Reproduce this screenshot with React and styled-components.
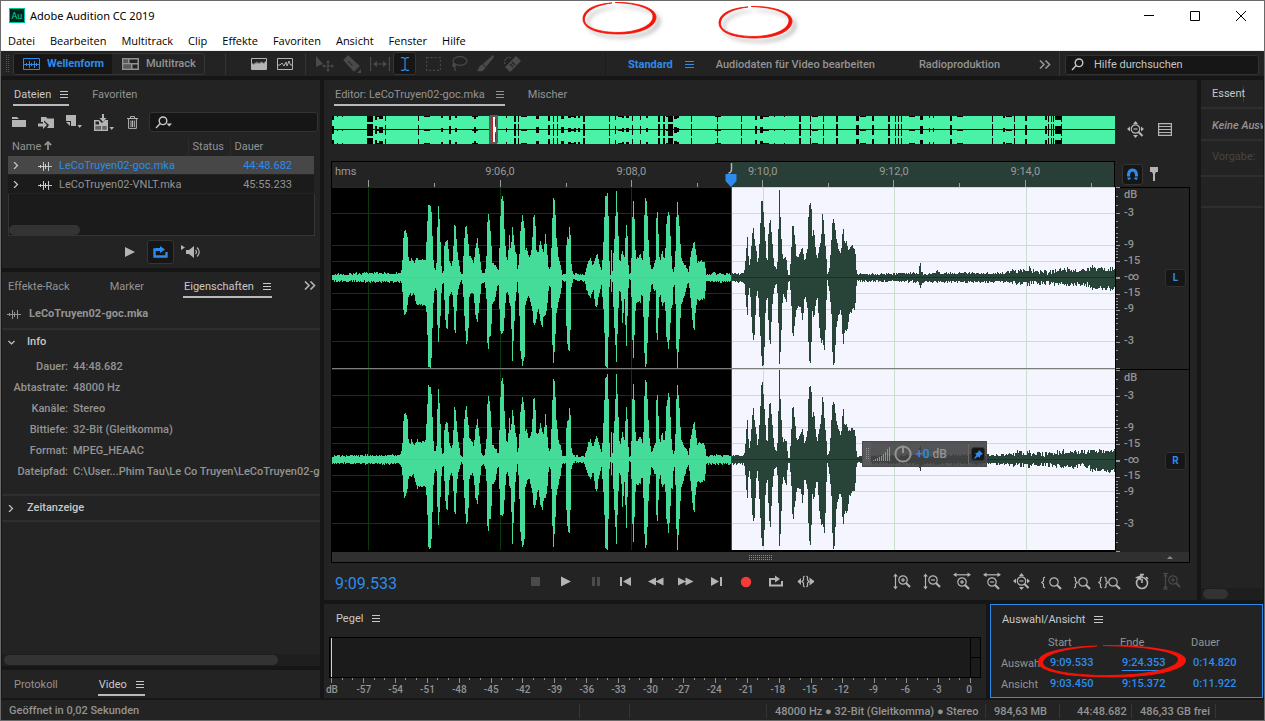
import React from "react";
import styled, { createGlobalStyle, css } from "styled-components";

const c = {
  gap: "#161616",
  panel: "#232323",
  well: "#1b1b1b",
  line: "#353535",
  dim: "#939393",
  text: "#c8c8c8",
  icon: "#b4b4b4",
  off: "#4a4a4a",
  blue: "#2d8ceb",
  green: "#44dc98",
  dark: "#284337",
};

const Global = createGlobalStyle`
  * { box-sizing: border-box; }
  body { margin: 0; background: ${c.gap}; }
  button, input { font: inherit; color: inherit; margin: 0; padding: 0; border: 0; background: none; }
  button { cursor: default; }
`;

/* ---------- shell ---------- */
const Shell = styled.div`
  position: relative;
  display: flex;
  flex-direction: column;
  min-height: 100vh;
  border: 1px solid #6a6a6a;
  background: ${c.gap};
  color: ${c.dim};
  font: 500 11px/16px Roboto, "Liberation Sans", sans-serif;
  overflow: hidden;
  white-space: nowrap;
`;
const Chrome = styled.header`
  background: #fff;
  color: #000;
  font: 400 11px/16px "Open Sans", "Noto Sans", sans-serif;
  box-shadow: inset 0 -1px #eee;
`;
const TitleBar = styled.div`
  display: flex;
  align-items: center;
  height: 29px;
  padding-left: 8px;
`;
const AppName = styled.h1`
  flex: 1;
  margin: 0 0 0 5px;
  font: 400 11px/16px "Noto Sans", sans-serif;
`;
const WinButton = styled.button`
  display: grid;
  place-items: center;
  width: 46px;
  height: 28px;
`;
const MenuBar = styled.nav`
  display: flex;
  gap: 15px;
  height: 21px;
  padding-left: 7px;
  align-items: center;
`;
const MenuItem = styled.button`
  line-height: 18px;
`;

/* ---------- toolbar ---------- */
const ToolBar = styled.div`
  display: flex;
  align-items: center;
  height: 25px;
  margin-bottom: 4px;
  background: ${c.panel};
`;
const Modes = styled.div`
  display: flex;
  height: 22px;
  margin-left: 3px;
  border: 1px solid ${c.line};
  border-radius: 3px;
  overflow: hidden;
`;
const Mode = styled.button`
  display: flex;
  align-items: center;
  gap: 7px;
  width: ${(p) => (p.$on ? 98 : 92)}px;
  padding-left: ${(p) => (p.$on ? 9 : 10)}px;
  background: ${(p) => (p.$on ? c.gap : "none")};
  color: ${(p) => (p.$on ? c.blue : c.dim)};
  font-weight: ${(p) => (p.$on ? 700 : 500)};
`;
const Rule = styled.span`
  width: 1px;
  height: ${(p) => p.$h || 22}px;
  background: ${(p) => p.$c || c.line};
  flex: none;
`;
const ToolGroup = styled.div`
  display: flex;
  align-items: center;
  justify-content: center;
  padding: ${(p) => p.$pad || "0"};
  gap: ${(p) => p.$gap || 0}px;
`;
const IconButton = styled.button`
  display: grid;
  place-items: center;
  flex: none;
  width: ${(p) => p.$w || 24}px;
  height: ${(p) => p.$h || 24}px;
  color: ${(p) => (p.$off ? c.off : p.$blue ? c.blue : p.$red ? "#f73b3b" : c.icon)};
  ${(p) =>
    p.$boxed &&
    css`
      background: ${c.gap};
      border: 1px solid ${c.line};
      border-radius: 3px;
    `}
`;
const Spaces = styled.div`
  display: flex;
  flex: 1;
  align-items: center;
  padding: 2px 0 0 22px;
`;
const Space = styled.button`
  display: flex;
  align-items: center;
  gap: 12px;
  margin-right: ${(p) => p.$mr || 0}px;
  color: ${(p) => (p.$on ? c.blue : c.dim)};
  font-weight: ${(p) => (p.$on ? 700 : 500)};
`;
const SearchBox = styled.label`
  display: flex;
  align-items: center;
  gap: ${(p) => p.$gap || 4}px;
  height: 20px;
  width: ${(p) => (p.$w ? p.$w + "px" : "auto")};
  flex: ${(p) => (p.$w ? "none" : 1)};
  padding-left: 5px;
  background: ${c.gap};
  border: 1px solid #333;
  border-radius: 3px;
  color: ${c.text};
  input {
    flex: 1;
    min-width: 0;
    outline: none;
    font-weight: 400;
  }
  input::placeholder { color: #c4c4c4; opacity: 1; }
`;

/* ---------- workspace ---------- */
const Workspace = styled.main`
  display: flex;
  flex: 1;
  gap: 4px;
  padding: 0 1px;
`;
const Column = styled.div`
  display: flex;
  flex-direction: column;
  gap: 4px;
  min-width: 0;
  flex: ${(p) => (p.$w ? "none" : 1)};
  width: ${(p) => (p.$w ? p.$w + "px" : "auto")};
`;
const Row = styled.div`
  display: flex;
  gap: 4px;
  flex: ${(p) => (p.$grow ? 1 : "none")};
`;
const Panel = styled.section`
  display: flex;
  flex-direction: column;
  min-width: 0;
  flex: ${(p) => (p.$grow ? 1 : "none")};
  width: ${(p) => (p.$w ? p.$w + "px" : "auto")};
  background: ${c.panel};
  border: ${(p) => (p.$active ? `1px solid ${c.blue}` : "0")};
  overflow: hidden;
`;
const Tabs = styled.div`
  display: flex;
  align-items: flex-start;
  gap: ${(p) => p.$gap || 22}px;
  height: ${(p) => p.$h || 28}px;
  padding: 6px 4px 0 ${(p) => (p.$pl === undefined ? 11 : p.$pl)}px;
`;
const TabSet = styled.div`
  display: flex;
  gap: 38px;
`;
const Tab = styled.button`
  display: flex;
  align-items: center;
  gap: ${(p) => p.$gap || 9}px;
  height: 20px;
  padding: 0 1px 1px;
  border-bottom: 2px solid ${(p) => (p.$on ? "#b9b9b9" : "transparent")};
  color: ${(p) => (p.$bright ? c.text : c.dim)};
  font-weight: 400;
`;
const PushRight = styled.span`
  margin-left: auto;
  display: flex;
`;

/* files panel */
const FileTools = styled.div`
  display: flex;
  align-items: center;
  padding: 2px 5px 0 4px;
`;
const FileTable = styled.table`
  width: 306px;
  margin: 4px 6px 0;
  border-collapse: collapse;
  table-layout: fixed;
  th, td { padding: 0; font-weight: 400; text-align: left; }
  th { height: 18px; padding-left: 4px; }
  th + th { border-left: 1px solid #2c2c2c; }
`;
const FileRow = styled.tr`
  height: 19px;
  background: ${(p) => (p.$on ? "#474747" : c.well)};
  color: ${(p) => (p.$on ? c.blue : c.dim)};
  box-shadow: inset 0 -1px ${c.panel};
  td:last-child { text-align: right; padding-right: 22px; }
`;
const FileName = styled.span`
  display: flex;
  align-items: center;
  padding-left: 5px;
  svg { color: ${c.text}; }
  svg + svg { margin: 0 7px 0 18px; }
`;
const ListRest = styled.div`
  display: flex;
  align-items: flex-end;
  height: 42px;
  margin: 0 5px 0 6px;
  background: ${c.well};
  border: solid ${c.line};
  border-width: 0 1px 1px;
`;
const Thumb = styled.div`
  width: ${(p) => p.$w};
  height: 10px;
  border-radius: 5px;
  background: #333;
`;
const Preview = styled.div`
  display: flex;
  align-items: center;
  justify-content: center;
  gap: 4px;
  height: 32px;
`;

/* properties panel */
const Subject = styled.div`
  display: flex;
  align-items: center;
  gap: 8px;
  height: 30px;
  padding-left: 5px;
  border-bottom: 2px solid #2e2e2e;
  font-weight: 700;
`;
const Fold = styled.button`
  display: flex;
  align-items: center;
  gap: ${(p) => p.$gap || 12}px;
  height: 24px;
  padding-left: 6px;
  color: ${c.text};
`;
const Facts = styled.dl`
  display: grid;
  grid-template-columns: 66px 1fr;
  column-gap: 5px;
  grid-auto-rows: 21px;
  align-items: center;
  margin: 2px 0 12px;
  dt { text-align: right; }
  dd { margin: 0; overflow: hidden; }
`;
const FoldRow = styled.div`
  border: solid #2e2e2e;
  border-width: 2px 0;
`;
const ScrollTrack = styled.div`
  margin-top: auto;
  padding: 1px 2px;
  background: #1e1e1e;
`;

/* editor */
const EditorBody = styled.div`
  display: flex;
  flex: 1;
  flex-direction: column;
  padding: 0 7px;
`;
const Split = styled.div`
  display: flex;
  padding-top: ${(p) => p.$pt || 0}px;
  flex: ${(p) => (p.$grow ? 1 : "none")};
`;
const Side = styled.div`
  display: flex;
  align-items: center;
  flex: none;
  width: 75px;
  gap: ${(p) => p.$gap || 0}px;
  padding-left: ${(p) => p.$pl || 7}px;
`;
const Strip = styled.svg`
  display: block;
  flex: 1;
  min-width: 0;
  height: 29px;
  margin-left: 1px;
`;
const Ruler = styled.div`
  display: grid;
  grid-template-columns: 205fr repeat(5, 263fr) 46fr;
  flex: 1;
  height: 26px;
  border: solid #000;
  border-width: 1px 1px 0;
  font-weight: 400;
  text-align: center;
  color: #9a9a9a;
  svg { grid-area: 1 / 1 / 2 / -1; width: 100%; height: 25px; display: block; }
`;
const Mark = styled.span`
  grid-row: 1;
  grid-column: ${(p) => p.$col};
  padding-top: 2px;
`;
const Unit = styled(Mark)`
  text-align: left;
  padding-left: 3px;
`;
const Waves = styled.div`
  position: relative;
  display: flex;
  flex: 1;
  flex-direction: column;
  border: solid #000;
  border-width: 0 1px 2px;
  background: #000;
`;
const Channel = styled.svg`
  display: block;
  flex: 1;
  width: 100%;
  height: 0;
  min-height: 60px;
  border-bottom: ${(p) => (p.$line ? "1px solid #7d7d7d" : 0)};
`;
const Scales = styled.div`
  display: flex;
  flex-direction: column;
  width: 74px;
  border: solid #000;
  border-width: 0 1px 0 0;
  box-shadow: inset 0 1px #000;
`;
const Scale = styled.div`
  display: flex;
  align-items: center;
  flex: 1;
  border-bottom: ${(p) => (p.$line ? "1px solid #000" : 0)};
  svg { align-self: stretch; width: 6px; height: auto; }
`;
const ScaleNumbers = styled.div`
  display: grid;
  align-self: stretch;
  flex: 1;
  grid-template-rows: 16fr 20fr 14fr 16fr 16fr 16fr 16fr 16fr 14fr 20fr 18fr;
  align-items: center;
  padding-left: 2px;
  line-height: 14px;
`;
const ChannelButton = styled.button`
  width: 21px;
  height: 18px;
  margin-right: 3px;
  border: 1px solid #303030;
  border-radius: 3px;
  background: ${c.gap};
  color: ${c.blue};
  font-size: 10px;
  font-weight: 700;
`;
const WaveScroll = styled.div`
  display: flex;
  align-items: center;
  justify-content: space-between;
  height: 11px;
  padding: 0 16px 0 417px;
  border: 1px solid #000;
  border-top: 0;
  background: #303030;
  color: #8a8a8a;
`;
const Hud = styled.div`
  position: absolute;
  left: 530px;
  top: 254px;
  display: flex;
  align-items: center;
  width: 125px;
  height: 26px;
  border: 1px solid #4a4a4c;
  background: rgba(66, 66, 68, 0.9);
  font-size: 12px;
  b { color: ${c.blue}; font-weight: 500; }
`;
const HudGrip = styled.span`
  display: grid;
  place-items: center;
  width: 8px;
  height: 100%;
  margin-right: 2px;
  background: #5a5a5c;
`;
const HudValue = styled.span`
  flex: 1;
  margin-left: 4px;
`;
const Transport = styled.div`
  display: flex;
  align-items: center;
  justify-content: space-between;
  height: 37px;
  padding: 0 10px 0 11px;
`;
const Time = styled.output`
  width: 185px;
  color: ${c.blue};
  font: 400 16px/20px Roboto, sans-serif;
  padding-top: 4px;
`;
const Spacer = styled.span`
  flex: 1;
`;

/* right hand panel */
const SideRow = styled.div`
  height: ${(p) => p.$h}px;
  padding: ${(p) => p.$pt || 0}px 0 0 11px;
  border-bottom: 2px solid #2e2e2e;
  color: ${(p) => p.$c || c.dim};
  font-style: ${(p) => (p.$it ? "italic" : "normal")};
  font-weight: ${(p) => (p.$it ? 500 : 400)};
  overflow: hidden;
`;
const Cut = styled.button`
  width: 32px;
  text-align: left;
  border-right: 1px solid #3a3a3a;
  color: ${c.text};
`;

/* level meter */
const Meter = styled.div`
  display: flex;
  height: 41px;
  margin: 5px 5px 0;
  border: 1px solid #000;
  background: ${c.well};
`;
const MeterBars = styled.div`
  flex: 1;
  margin-left: 1px;
  border-left: 1px solid #e8e42c;
`;
const MeterClip = styled.div`
  width: 10px;
  border-left: 1px solid #000;
  background: linear-gradient(#000, #000) 0 19px / 100% 1px no-repeat;
`;
const MeterScale = styled.svg`
  display: block;
  width: calc(100% - 22px);
  height: 5px;
  margin-left: 7px;
`;
const MeterNumbers = styled.div`
  display: grid;
  grid-template-columns: repeat(21, minmax(0, 1fr));
  margin: 0 1px 0 -8px;
  font-size: 10px;
  line-height: 14px;
  text-align: center;
`;

/* selection panel */
const SelTable = styled.table`
  border-collapse: collapse;
  margin: 0 0 2px 10px;
  width: 244px;
  table-layout: fixed;
  th, td { padding: 0; height: 21px; text-align: left; font-weight: 400; }
  thead th { height: 20px; }
  td { color: ${c.blue}; padding-left: 2px; font-weight: 500; }
`;
const Value = styled.button`
  display: block;
  line-height: 14px;
  border-bottom: 1px solid ${(p) => (p.$edit ? c.blue : "transparent")};
`;

const Ring = styled.svg`
  position: absolute;
  pointer-events: none;
  overflow: visible;
  ${(p) => p.$at}
`;

const StatusBar = styled.footer`
  display: flex;
  align-items: center;
  height: 20px;
  margin-top: 2px;
  padding: 1px 0 0 8px;
  background: ${c.panel};
`;
const Cell = styled.span`
  width: ${(p) => p.$w}px;
  height: 14px;
  line-height: 16px;
  border-left: 1px solid ${c.line};
  padding-left: ${(p) => p.$pl || 8}px;
`;

/* ---------- icons ---------- */
const Icon = ({ w = 16, h = 16, children, ...r }) => (
  <svg width={w} height={h} viewBox={`0 0 ${w} ${h}`} fill="none" stroke="currentColor" strokeWidth="1.2" aria-hidden="true" {...r}>
    {children}
  </svg>
);
const F = { fill: "currentColor", stroke: "none" };
const Burger = ({ w = 8 }) => (
  <Icon w={w} h={9} strokeWidth="1">
    <path d={`M0 1.500H${w}M0 4.500H${w}M0 7.500H${w}`} />
  </Icon>
);
const WaveGlyph = () => (
  <Icon w={14} h={10} strokeWidth="1">
    <path d="M0 5.500H14M2.500 4V7M5.500 1V10M7.500 3V8M10.500 1V10M12.500 5V6" />
  </Icon>
);
const More = () => (
  <Icon w={12} h={9} strokeWidth="1.600">
    <path d="M1 .500L5 4.500L1 8.500M6.500 .500L10.500 4.500L6.500 8.500" />
  </Icon>
);
const Chev = ({ down }) => (
  <Icon w={7} h={7} strokeWidth="1.200">
    <path d={down ? "M.500 2L3.500 5L6.500 2" : "M1 0L4.500 3.500L1 7"} />
  </Icon>
);
const SearchGlyph = ({ w = 13, drop }) => (
  <Icon w={drop ? 18 : w} h={13} strokeWidth="1.400">
    <circle cx="8" cy="4.800" r="3.800" />
    <path d="M5.200 7.600L1 12" />
    {drop && <path d="M11.500 7.500H17L14.200 10.500Z" {...F} />}
  </Icon>
);
const Lens = ({ x = 9, y = 7, sign }) => (
  <>
    <circle cx={x} cy={y} r="4.200" strokeWidth="1.200" />
    <path d={`M${x + 3} ${y + 3}L${x + 7} ${y + 7}`} strokeWidth="2.200" />
    {sign && <path d={`M${x - 2} ${y}H${x + 2}`} />}
    {sign === "+" && <path d={`M${x} ${y - 2}V${y + 2}`} />}
  </>
);
const VArrow = () => (
  <>
    <path d="M2.500 2V15" />
    <path d="M.200 3.600L2.500 .500L4.800 3.600ZM.200 13.400L2.500 16.500L4.800 13.400Z" {...F} />
  </>
);
const HArrow = () => (
  <>
    <path d="M2 1.800H16" />
    <path d="M3.500 -.400L0 1.800L3.500 4ZM14.500 -.400L18 1.800L14.500 4Z" {...F} />
  </>
);
const FourWay = () => <path d="M8.500 0L11 3H6ZM8.500 17L11 14H6ZM0 8L3 5.500V10.500ZM17 8L14 5.500V10.500Z" {...F} />;

const zoomIcons = [
  ["Amplitude vergrößern", <><VArrow /><Lens x={10} sign="+" /></>],
  ["Amplitude verkleinern", <><VArrow /><Lens x={10} sign="-" /></>],
  ["Zeit vergrößern", <><HArrow /><Lens x={9} y={9} sign="+" /></>],
  ["Zeit verkleinern", <><HArrow /><Lens x={9} y={9} sign="-" /></>],
  ["Vollständig anzeigen", <><FourWay /><Lens x={8.5} y={8} sign="-" /></>],
  ["Am Startpunkt zoomen", <><path d="M2 4L.500 5V8L-1.200 9.500L.500 11V14L2 15" /><Lens x={11} y={9} /></>],
  ["Am Endpunkt zoomen", <><path d="M1 4L2.500 5V8L4.200 9.500L2.500 11V14L1 15" /><Lens x={10} y={9} /></>],
  ["Auswahl zoomen", <><path d="M-1 4L-2.500 5V8L-4.200 9.500L-2.500 11V14L-1 15M1.500 4L3 5V8L4.700 9.500L3 11V14L1.500 15" /><Lens x={10} y={9} /></>],
  ["Zeit zoomen", <><circle cx="9" cy="10" r="5.500" strokeWidth="1.600" /><path d="M9 10V6M9 4V1M7 1.500H11M13 4L15 6" strokeWidth="1.600" /><path d="M2 4.500L8 2V7.500Z" {...F} /></>],
  ["Spurhöhe zoomen", <><VArrow /><path d="M0 .500H5M0 16H5" /><Lens x={10} sign="+" /></>],
];

const transportIcons = [
  ["Stopp", "off", <path d="M4 4H13V13H4Z" {...F} />],
  ["Wiedergabe", "", <path d="M4 3.500L14 8.500L4 13.500Z" {...F} />],
  ["Pause", "off", <path d="M5 4H8V13H5ZM10 4H13V13H10Z" {...F} />],
  ["Zum Anfang", "", <path d="M3 4H5V13H3ZM14 4V13L6 8.500Z" {...F} />],
  ["Zurückspulen", "", <path d="M9 4.500V12.500L1 8.500ZM16.500 4.500V12.500L8.500 8.500Z" {...F} />],
  ["Vorspulen", "", <path d="M1 4.500V12.500L9 8.500ZM8.500 4.500V12.500L16.500 8.500Z" {...F} />],
  ["Zum Ende", "", <path d="M4 4V13L12 8.500ZM13 4H15V13H13Z" {...F} />],
  ["Aufnahme", "red", <circle cx="9" cy="9" r="5.200" {...F} />],
  ["Schleife", "", <><path d="M5 6H3V12.500H15V8" strokeWidth="2" /><path d="M4 5H8V2.500L13 6L8 9.500V7H4Z" {...F} /></>],
  ["Auswahl überspringen", "", <><path d="M1 8.500H4M13 8.500H17" strokeWidth="1.600" /><path d="M7.500 3L6.500 4V7L5 8.500L6.500 10V13L7.500 14M9.500 3L10.500 4V7L12 8.500L10.500 10V13L9.500 14" /><path d="M4 5L.500 8.500L4 12ZM12.500 4.500L17.500 8.500L12.500 12.500Z" {...F} /></>],
];

/* ---------- waveform data ----------
   [time, peak above, peak below]; time runs in thirds of a drawing unit */
const envelope = [
  [0,3,3],[120,4,4],[180,4,4],[205,4,4],[210,10,8],[215,46,38],[222,46,36],[226,40,28],[229,20,20],[234,14,15],[239,20,18],[245,14,14],[251,17,24],[256,20,28],[262,17,27],[280,18,27],
  [285,48,40],[288,73,88],[297,72,90],[300,50,60],[305,10,16],[312,7,7],[315,25,20],[317,76,74],[321,64,56],[326,28,34],[329,4,6],[334,6,6],[337,30,22],[341,37,49],[347,37,51],[351,17,20],[360,10,12],
  [364,30,30],[366,54,53],[370,50,54],[375,30,20],[380,14,11],[387,2,2],[391,3,5],[394,22,20],[399,50,50],[403,52,65],[408,38,60],[412,22,18],[419,19,14],[425,12,16],[429,28,36],[436,39,45],[442,22,24],[449,4,4],[459,5,6],
  [463,20,22],[467,66,80],[472,58,60],[477,40,58],[480,14,26],[489,12,22],[497,7,6],[501,8,8],[503,50,53],[509,84,57],[514,76,54],[517,48,40],[522,20,16],[527,16,12],[532,41,25],[536,25,30],[541,49,84],[546,40,50],[549,20,27],[551,31,19],[556,8,5],
  [561,14,22],[564,44,70],[571,63,88],[577,50,80],[580,28,28],[584,30,22],[590,20,17],[597,24,26],[601,40,34],[605,66,48],[609,58,46],[613,26,40],[618,24,28],[625,36,44],[631,27,49],[635,26,38],[640,44,38],[645,26,30],[650,6,8],[656,10,10],
  [658,30,30],[663,80,90],[668,76,70],[673,40,36],[679,20,24],[686,12,14],[691,2,3],[700,4,4],[704,40,64],[711,38,75],[712,51,74],[716,40,44],[718,12,10],[722,4,2],[740,3,3],[757,3,3],[762,8,10],
  [768,16,16],[775,19,20],[783,12,11],[789,20,28],[795,24,31],[800,16,17],[808,7,8],[812,20,24],[816,50,40],[819,80,88],[826,84,90],[829,60,60],[831,20,10],[835,2,2],[838,26,14],[841,6,4],[844,25,30],[848,44,56],[853,86,84],[858,50,36],[863,10,8],[868,22,24],[872,28,54],[876,16,18],
  [879,30,30],[882,58,78],[886,40,38],[890,3,2],[897,3,3],[900,50,50],[903,81,90],[907,58,56],[911,17,24],[918,20,25],[926,24,24],[930,14,12],[935,30,46],[938,79,90],[944,76,86],[948,44,46],[953,16,18],[959,5,5],[966,14,13],[971,18,13],[974,80,76],[979,44,40],[983,12,12],
  [990,28,28],[995,18,24],[999,20,24],[1003,54,58],[1009,66,72],[1013,60,60],[1017,24,30],[1021,8,28],[1025,4,4],[1029,14,12],[1033,60,70],[1036,75,90],[1042,52,60],[1047,20,28],[1055,14,20],[1063,10,10],[1070,4,4],[1075,20,20],[1083,34,50],[1087,36,52],[1091,26,30],[1096,15,22],[1104,17,23],[1118,15,20],[1123,3,4],[1140,4,4],
  [1199,3,4],[1236,4,4],[1242,22,22],[1245,46,44],[1249,20,18],[1253,9,8],[1260,40,50],[1263,54,63],[1268,34,56],[1272,30,20],[1277,10,10],[1284,44,50],[1287,75,75],[1292,78,90],[1296,55,85],[1299,40,40],[1305,10,14],[1310,50,50],[1314,60,75],[1320,38,30],[1326,12,10],[1335,7,7],
  [1338,34,30],[1342,88,86],[1346,50,70],[1352,17,16],[1358,20,20],[1364,18,26],[1367,2,4],[1373,2,3],[1379,36,32],[1382,58,67],[1388,40,45],[1394,18,30],[1400,20,28],[1406,26,29],[1412,30,45],[1418,14,16],[1426,28,30],[1430,72,75],[1434,74,90],[1437,76,74],[1441,42,34],[1445,50,42],[1451,26,26],[1455,17,16],
  [1462,30,50],[1467,38,66],[1472,68,62],[1478,37,75],[1482,24,30],[1486,4,2],[1493,10,16],[1499,44,40],[1502,59,90],[1508,54,86],[1512,40,50],[1520,28,36],[1527,24,32],[1533,54,69],[1538,32,50],[1542,38,54],[1548,29,50],[1551,28,36],[1558,31,34],[1563,31,30],[1569,29,31],[1572,10,10],[1575,3,3],
  [1760,4,4],[1764,18,13],[1767,5,7],[1776,3,4],[1812,4,4],[1815,7,5],[1824,4,4],[2004,4,4],[2064,7,6],[2088,6,6],[2091,11,7],[2097,6,5],[2148,5,5],[2175,7,7],[2208,8,8],[2250,7,6],[2274,8,8],[2277,12,12],[2289,8,9],[2328,9,11],[2349,9,12],
];

function columns(seed, from, to) {
  let s = seed;
  const rnd = () => ((s = (s * 16807) % 2147483647) / 2147483647);
  let k = 0;
  let d = "";
  for (let x = 0; x < 783; x++) {
    const at = x * 3 + 1;
    while (k < envelope.length - 2 && envelope[k + 1][0] <= at) k++;
    const a = envelope[k];
    const b = envelope[k + 1];
    const t = Math.min(1, (at - a[0]) / (b[0] - a[0]));
    const rough = at > 2040 ? 5 : 2.4;
    const up = Math.max(1, Math.round(a[1] + (b[1] - a[1]) * t + (rnd() - 0.6) * rough));
    const dn = Math.max(1, Math.round(a[2] + (b[2] - a[2]) * t + (rnd() - 0.6) * rough));
    if (x >= from && x < to) d += `M${x} ${90 - Math.min(up, 89)}h1V${91 + Math.min(dn, 90)}h-1z`;
  }
  return d;
}

const gridY = [0, 26, 58, 74, 106, 122, 154];
const gridX = [36, 168, 299, 431, 562, 694];

function WaveChannel({ seed, line }) {
  return (
    <Channel viewBox="0 0 783 181" preserveAspectRatio="none" shapeRendering="crispEdges" $line={line} role="img" aria-label="Wellenform">
      <rect x="400" width="383" height="181" fill="#f5f5ff" />
      {gridY.map((y) => (
        <g key={y}>
          <rect x="0" y={y} width="400" height="1" fill="#0a3a0a" />
          <rect x="400" y={y} width="383" height="1" fill="#c9dfce" />
        </g>
      ))}
      {gridX.map((x) => (
        <rect key={x} x={x} width="1" height="181" fill={x < 400 ? "#0a3a0a" : "#c9dfce"} />
      ))}
      <path d={columns(seed, 0, 400)} fill={c.green} />
      <path d={columns(seed, 400, 783)} fill={c.dark} />
      <rect y="90" width="400" height="1" fill="#4ccf95" />
      <rect x="400" y="90" width="383" height="1" fill="#1c2f27" />
      <rect x="399" width="1" height="181" fill="#c81414" />
    </Channel>
  );
}

/* overview: [x, width, how quiet 0..1] */
const quiet = [
  [0,2,.8],[5,1,.4],[10,1,.4],[35,6,1],[43,2,.8],[47,4,.7],[53,1,.9],[86,1,.9],[109,2,.6],[117,2,.8],[123,2,.6],[142,2,.7],[174,1,.5],[182,2,1],[186,1,1],[204,3,.7],[216,2,.9],[221,1,1],[225,1,1],[229,3,.7],[236,3,.6],[242,2,.6],[246,2,.6],[251,2,1],[277,1,1],[283,1,.8],[290,2,.6],[294,3,.6],[300,1,.9],[308,1,.8],[314,2,.6],[326,2,1],[331,2,1],[336,5,1],[342,3,.7],[345,2,.5],[359,1,1],[385,1,1],[409,1,1],[423,2,.8],[428,3,.7],
  [467,2,1],[478,1,1],[491,1,1],[504,2,1],[524,3,.9],[540,2,.9],[556,2,1],[563,1,1],[566,1,1],[569,1,1],[588,3,.8],[597,1,.5],[601,1,.5],[618,2,.9],[660,1,1],[671,2,.5],[682,1,1],[693,2,.9],[713,2,.8],[716,1,1],[719,1,1],[721,1,1],[723,6,.8],[729,1,1],[442,1,.4],[452,1,.4],
];
const notches = Array.from({ length: 90 }, (_, i) => [(i * 97) % 728, 1, 0.4]);
const blocks = [...quiet, ...notches]
  .map(([x, w, q]) => {
    const k = q >= 1 ? 6 : Math.max(1, Math.round(q * q * 6));
    return [0, 1]
      .map((i) => {
        const top = 1 + i * 14;
        return `M${x} ${top}h${w}v${k}h-${w}zM${x} ${top + 14 - k}h${w}v${k}h-${w}z`;
      })
      .join("");
  })
  .join("");

const scaleTicks = [0, 9, 18, 26, 34, 40, 46, 50, 54, 58, 61, 64, 67, 70, 74, 90, 106, 110, 113, 116, 119, 122, 126, 130, 135, 141, 148, 154, 162, 171, 180];
const majors = [0, 26, 58, 74, 90, 106, 122, 154, 180];

function DbScale({ name, line }) {
  return (
    <Scale $line={line}>
      <svg viewBox="0 0 6 181" preserveAspectRatio="none" shapeRendering="crispEdges" aria-hidden="true">
        {scaleTicks.map((y) => (
          <rect key={y} y={y} width={majors.includes(y) ? 4 : 2} height="1" fill="#9a9a9a" />
        ))}
      </svg>
      <ScaleNumbers>
        {["dB", "-3", "", "-9", "-15", "-∞", "-15", "-9", "", "-3", ""].map((t, i) => (
          <span key={i}>{t}</span>
        ))}
      </ScaleNumbers>
      <ChannelButton>{name}</ChannelButton>
    </Scale>
  );
}

const ringPath = "M30 1C12 2 1 8 1 17C1 27 17 32 37 32C58 32 74 25 74 15C74 6 55 0 33 .500C55 1 72 7 71 15C70 24 55 30 37 30.500C18 30.500 2 26 2.500 17C3 9 14 3 30 1Z";
const RedRing = ({ at, shadow }) => (
  <Ring $at={at} viewBox="0 0 75 33" preserveAspectRatio="none" aria-hidden="true">
    {shadow && <path d={ringPath} fill="#777" stroke="#777" opacity=".5" transform="translate(4 4)" style={{ filter: "blur(2px)" }} />}
    <path d={ringPath} fill="#f41408" stroke="#f41408" strokeWidth={shadow ? 0.8 : 1} />
  </Ring>
);

const files = [
  { name: "LeCoTruyen02-goc.mka", time: "44:48.682", on: true },
  { name: "LeCoTruyen02-VNLT.mka", time: "45:55.233" },
];
const facts = [
  ["Dauer:", "44:48.682"],
  ["Abtastrate:", "48000 Hz"],
  ["Kanäle:", "Stereo"],
  ["Bittiefe:", "32-Bit (Gleitkomma)"],
  ["Format:", "MPEG_HEAAC"],
  ["Dateipfad:", "C:\\User...Phim Tau\\Le Co Truyen\\LeCoTruyen02-goc.mka"],
];
const menus = ["Datei", "Bearbeiten", "Multitrack", "Clip", "Effekte", "Favoriten", "Ansicht", "Fenster", "Hilfe"];
const levels = ["dB", -57, -54, -51, -48, -45, -42, -39, -36, -33, -30, -27, -24, -21, -18, -15, -12, -9, -6, -3, 0];

function Header() {
  return (
    <Chrome>
      <TitleBar>
        <svg width="16" height="16" viewBox="0 0 16 16" aria-hidden="true">
          <rect x=".5" y=".5" width="15" height="14" fill="#03231d" stroke="#00c896" />
          <text x="2.500" y="11" fontSize="9" fontFamily="Roboto" fill="#00dca0">Au</text>
        </svg>
        <AppName>Adobe Audition CC 2019</AppName>
        <WinButton aria-label="Minimieren"><Icon w={10} h={10} strokeWidth="1"><path d="M0 4.500H10" /></Icon></WinButton>
        <WinButton aria-label="Maximieren"><Icon w={10} h={10} strokeWidth="1"><path d="M.500 .500H9.500V9.500H.500Z" /></Icon></WinButton>
        <WinButton aria-label="Schließen"><Icon w={10} h={10} strokeWidth="1"><path d="M0 0L10 10M10 0L0 10" /></Icon></WinButton>
      </TitleBar>
      <MenuBar>{menus.map((m) => <MenuItem key={m}>{m}</MenuItem>)}</MenuBar>
    </Chrome>
  );
}

function Tools() {
  return (
    <ToolBar>
      <ToolGroup $pad="0 0 0 5px">
        <Icon w={4} h={18} strokeDasharray="1 1" strokeWidth="1"><path d="M.5 0V18M2.500 0V18" opacity=".4" /></Icon>
      </ToolGroup>
      <Modes>
        <Mode $on>
          <Icon w={17} h={12} strokeWidth="1"><path d="M.500 .500H16.500V11.500H.500ZM1 6.500H16M3.500 5V8M6.500 3V10M8.500 5V8M11.500 3V10M13.500 5V8" /></Icon>
          Wellenform
        </Mode>
        <Mode>
          <Icon w={17} h={12}><path d="M0 0H17V12H0ZM1.500 1.500V5H6V1.500ZM7.500 1.500V5H15.500V1.500ZM1.500 6.500V10.500H9V6.500ZM10.500 6.500V10.500H15.500V6.500Z" {...F} fillRule="evenodd" /><path d="M1.500 1.500H6V5H1.500ZM1.500 6.500H9V10.500H1.500Z" {...F} opacity=".5" /></Icon>
          Multitrack
        </Mode>
      </Modes>
      <ToolGroup $pad="0 20px 0 20px"><Rule /></ToolGroup>
      <IconButton $w={26} aria-label="Spektralfrequenz">
        <Icon w={16} h={12} strokeWidth="1"><path d="M.500 .500H15.500V11.500H.500Z" /><path d="M1 11V6L2 5L3 7L4 4L5 6L6 3L7 6L8 4L9 6L10 3L11 5L12 4L13 6L14 3L15 4V11Z" {...F} /></Icon>
      </IconButton>
      <IconButton $w={26} aria-label="Spektraltonhöhe">
        <Icon w={16} h={12} strokeWidth="1"><path d="M.500 .500H15.500V11.500H.500Z" /><path d="M1 7H3L5 5L7 8L9 4L10 8L12 3L13.500 7H15" /></Icon>
      </IconButton>
      <ToolGroup $pad="0 4px 0 7px"><Rule /></ToolGroup>
      <IconButton $w={28} $off aria-label="Verschieben">
        <Icon w={20} h={16}><path d="M2 0L9 8L2 11Z" {...F} /><path d="M9 10H19M14 5V15" /><path d="M14 4L16 6.500H12ZM14 16L16 13.500H12ZM8 10L10.500 8V12ZM20 10L17.500 8V12Z" {...F} /></Icon>
      </IconButton>
      <IconButton $w={28} $off aria-label="Rasierklinge">
        <Icon w={18} h={18}><path d="M5 1L16 11L11 16L1 5ZM5 5L11 11" fill="currentColor" /><path d="M5.500 6.500L10 11" stroke="#232323" strokeDasharray="2 1" /><path d="M18 14V18H14Z" {...F} /></Icon>
      </IconButton>
      <IconButton $w={27} $off aria-label="Dehnen">
        <Icon w={20} h={14}><path d="M.500 0V14M19.500 0V14M4 7H16" /><path d="M3 7L7 4V10ZM17 7L13 4V10Z" {...F} /></Icon>
      </IconButton>
      <IconButton $boxed $blue $w={23} $h={23} aria-label="Zeitauswahl" aria-pressed="true">
        <Icon w={8} h={14}><path d="M0 .600H2.500L4 2L5.500 .600H8M4 2V12M0 13.400H2.500L4 12L5.500 13.400H8" /></Icon>
      </IconButton>
      <ToolGroup $pad="0 0 0 4px">
        <IconButton $w={26} $off aria-label="Auswahlrechteck"><Icon w={15} h={14} strokeDasharray="2 2"><path d="M.600 .600H14.400V13.400H.600Z" /></Icon></IconButton>
        <IconButton $w={26} $off aria-label="Lasso"><Icon w={17} h={15}><ellipse cx="9" cy="5" rx="7" ry="4.400" /><path d="M3 7C1 9 2 11 4 10.500C6 10 4 8 3 9C3 12 5 13 4 15" /></Icon></IconButton>
        <IconButton $w={27} $off aria-label="Pinsel"><Icon w={17} h={17}><path d="M16 0L17 2L9 12L6 9ZM5.500 9.500L8.500 12.500C7 16 4 17 0 16C2 14 2 10 5.500 9.500Z" {...F} /></Icon></IconButton>
        <IconButton $w={27} $off aria-label="Bereichsreparatur"><Icon w={17} h={16}><path d="M12 0L17 5L6 16L1 11Z" {...F} /><path d="M1 8C-.5 4 3 0 7 2" strokeDasharray="2 1" /><path d="M8 6L11 9M6 8L9 11" stroke="#232323" /></Icon></IconButton>
      </ToolGroup>
      <ToolGroup $pad="0 0 0 79px"><Rule $c="#1b1b1b" /></ToolGroup>
      <Spaces>
        <Space $on $mr={22}>Standard <Burger w={9} /></Space>
        <Space $mr={44}>Audiodaten für Video bearbeiten</Space>
        <Space>Radioproduktion</Space>
        <PushRight><More /></PushRight>
      </Spaces>
      <ToolGroup $pad="0 5px 0 8px"><Rule $h={25} /></ToolGroup>
      <ToolGroup $pad="2px 5px 0 0">
        <SearchBox $w={194} $gap={10}><SearchGlyph /><input aria-label="Hilfe durchsuchen" placeholder="Hilfe durchsuchen" /></SearchBox>
      </ToolGroup>
    </ToolBar>
  );
}

function FilesPanel() {
  return (
    <Panel>
      <Tabs>
        <Tab $on $bright>Dateien <Burger /></Tab>
        <Tab>Favoriten</Tab>
      </Tabs>
      <FileTools>
        <IconButton $w={26} aria-label="Öffnen"><Icon w={14} h={12}><path d="M0 1H5L7 3H14V11H0Z" {...F} /><path d="M0 3.500H14" stroke="#232323" strokeWidth="1" /></Icon></IconButton>
        <IconButton $w={28} aria-label="Importieren"><Icon w={16} h={13}><path d="M3 1H8L9.500 2.500H16V12H9L11 9L6 4.500V6H3Z" {...F} /><path d="M0 7.500H5V5L9 9L5 13V10.500H0Z" {...F} /></Icon></IconButton>
        <IconButton $w={27} aria-label="Neu"><Icon w={16} h={14}><path d="M0 0H10V11H5V6H0ZM0 7H4V11Z" {...F} /><path d="M11.500 10H16L13.700 13Z" {...F} /></Icon></IconButton>
        <IconButton $w={33} aria-label="Einfügen"><Icon w={20} h={17}><path d="M0 6H5L8 9L11 6H14V17H0ZM1.500 7.500V10.500H5V7.500ZM1.500 12V15.500H7V12ZM8.500 12V15.500H12.500V12Z" {...F} fillRule="evenodd" /><path d="M1.500 12H7V15.500H1.500ZM8.500 12H12.500V15.500H8.500Z" {...F} opacity=".45" /><path d="M8 0H10V4H12.500L9 8L5.500 4H8Z" {...F} /><path d="M15.500 13H20L17.700 16Z" {...F} /></Icon></IconButton>
        <IconButton $w={25} aria-label="Löschen"><Icon w={11} h={13}><path d="M0 2.500H11M3.500 2V.600H7.500V2M1.600 3V12.400H9.400V3M4 4.500V11M5.500 4.500V11M7.300 4.500V11" strokeWidth="1" /></Icon></IconButton>
        <ToolGroup $pad="0 0 0 4px" />
        <SearchBox><SearchGlyph drop /><input aria-label="Dateien suchen" /></SearchBox>
      </FileTools>
      <FileTable>
        <colgroup><col width="180" /><col width="42" /><col width="84" /></colgroup>
        <thead>
          <tr>
            <th>Name <Icon w={8} h={9} strokeWidth="1.800"><path d="M4 9V1M.800 4.200L4 1L7.200 4.200" /></Icon></th>
            <th>Status</th>
            <th>Dauer</th>
          </tr>
        </thead>
        <tbody>
          {files.map((f) => (
            <FileRow key={f.name} $on={f.on}>
              <td><FileName><Chev /><WaveGlyph />{f.name}</FileName></td>
              <td />
              <td>{f.time}</td>
            </FileRow>
          ))}
        </tbody>
      </FileTable>
      <ListRest><Thumb $w="71px" /></ListRest>
      <Preview>
        <IconButton $w={26} aria-label="Abspielen"><Icon w={10} h={10}><path d="M0 0L10 5L0 10Z" {...F} /></Icon></IconButton>
        <IconButton $boxed $blue $w={27} aria-label="Schleife"><Icon w={15} h={12}><path d="M4 3.500H1.500V10.500H13.500V6" strokeWidth="2.400" /><path d="M3 2H7V0L12 3.500L7 7V5H3Z" {...F} /></Icon></IconButton>
        <IconButton $w={28} aria-label="Automatische Wiedergabe"><Icon w={21} h={14}><path d="M0 0L4 2.500L0 5ZM5 5H8L13 1V13L8 9H5Z" {...F} /><path d="M14.500 5Q16.500 7 14.500 9M16 2.500Q20.500 7 16 11.500" /></Icon></IconButton>
      </Preview>
    </Panel>
  );
}

function PropertiesPanel() {
  return (
    <Panel $grow>
      <Tabs $pl={5} $gap={8}>
        <TabSet>
          <Tab>Effekte-Rack</Tab>
          <Tab>Marker</Tab>
          <Tab $on $bright>Eigenschaften <Burger /></Tab>
        </TabSet>
        <PushRight><IconButton $w={12} $h={14} aria-label="Weitere"><More /></IconButton></PushRight>
      </Tabs>
      <Subject><WaveGlyph />LeCoTruyen02-goc.mka</Subject>
      <Fold><Chev down />Info</Fold>
      <Facts>
        {facts.map(([k, v]) => (
          <React.Fragment key={k}><dt>{k}</dt><dd>{v}</dd></React.Fragment>
        ))}
      </Facts>
      <FoldRow><Fold><Chev />Zeitanzeige</Fold></FoldRow>
      <ScrollTrack><Thumb $w="274px" /></ScrollTrack>
    </Panel>
  );
}

function Editor() {
  return (
    <Panel $grow>
      <Tabs $pl={10} $h={35}>
        <Tab $on $gap={11}>Editor: LeCoTruyen02-goc.mka <Burger /></Tab>
        <Tab>Mischer</Tab>
      </Tabs>
      <EditorBody>
        <Split>
          <Strip viewBox="0 0 783 29" preserveAspectRatio="none" shapeRendering="crispEdges" role="img" aria-label="Übersicht">
            <rect y="1" width="783" height="28" fill="#4af2a8" />
            <path d={blocks} fill="#000" />
            <rect y="14" width="783" height="1" fill="#000" />
            <rect x="157" y="0" width="9" height="29" rx="2" fill="#5a5a5a" />
            <rect x="160" y="2" width="3" height="25" fill="#fff" />
            <rect x="163" y="12" width="1" height="5" fill="#fff" />
            <rect x="163" y="4" width="1" height="6" fill={c.dark} />
            <rect x="163" y="19" width="1" height="6" fill={c.dark} />
            <rect x="160" y="2" width="1" height="25" fill="#c02020" />
          </Strip>
          <Side $gap={2}>
            <IconButton $w={28} aria-label="Alles anzeigen"><Icon w={18} h={18}><FourWay /><Lens x={8.5} y={8} sign="-" /></Icon></IconButton>
            <IconButton $w={26} aria-label="Liste"><Icon w={14} h={13} strokeWidth="1.200"><path d="M.600 .600H13.400V12.400H.600ZM.600 3.500H13.400M.600 6.500H13.400M.600 9.500H13.400" /></Icon></IconButton>
          </Side>
        </Split>
        <Split $pt={17}>
          <Ruler>
            <svg viewBox="0 0 783 25" preserveAspectRatio="none" aria-hidden="true">
              <rect x="400" width="383" height="25" fill="#283e36" />
              {gridX.map((x) => (
                <g key={x} fill="#9a9a9a" shapeRendering="crispEdges">
                  <rect x={x} y="18" width="1" height="7" />
                  <rect x={x + 66} y="21" width="1" height="4" />
                </g>
              ))}
              <path d="M397 11Q400 11 400 7V1" fill="none" stroke="#b5b5b5" strokeWidth="1.500" />
              <path d="M394 12H405V19L399.500 25L394 19Z" fill={c.blue} />
            </svg>
            <Unit $col={1}>hms</Unit>
            {["9:06,0", "9:08,0", "9:10,0", "9:12,0", "9:14,0"].map((t, i) => <Mark key={t} $col={i + 2}>{t}</Mark>)}
          </Ruler>
          <Side $gap={3} $pl={7}>
            <IconButton $boxed $blue $w={21} $h={21} aria-label="Ausrichten"><Icon w={13} h={13}><path d="M3.500 11.500C-1.500 -1.200 14.500 -1.200 9.500 11.500" strokeWidth="3" /><path d="M.500 9H6M7 9H12.500" stroke="#161616" strokeWidth="1" /></Icon></IconButton>
            <IconButton $w={16} aria-label="Marker setzen"><Icon w={9} h={14}><path d="M0 0H8V5H6L5 7V14H3V7L2 5H0Z" {...F} /></Icon></IconButton>
          </Side>
        </Split>
        <Split $grow>
          <Waves>
            <WaveChannel seed={77} line />
            <WaveChannel seed={4242} />
            <Hud>
              <HudGrip><Icon w={3} h={12} strokeDasharray="1 1" strokeWidth="1"><path d="M.500 0V12M2.500 0V12" /></Icon></HudGrip>
              <Icon w={17} h={14} strokeWidth="1"><path d="M.500 13V14M2.500 12V14M4.500 11V14M6.500 10V14M8.500 9V14M10.500 7V14M12.500 5V14M14.500 2V14M16.500 0V14" /></Icon>
              <ToolGroup $pad="0 0 0 4px"><Icon w={18} h={18} strokeWidth="2"><circle cx="9" cy="9" r="7.600" /><path d="M9 2V8" /></Icon></ToolGroup>
              <HudValue><b>+0</b> dB</HudValue>
              <Rule $c="#686868" $h={20} />
              <ToolGroup $pad="0 1px 0 2px">
                <IconButton $boxed $blue $w={14} $h={14} aria-label="Anheften"><Icon w={9} h={9}><path d="M5 0L9 4L7.500 4.500L6 6V8L4 6.500L.500 9L0 8.500L2.500 5L1 3H3L4.500 1.500Z" {...F} /></Icon></IconButton>
              </ToolGroup>
            </Hud>
          </Waves>
          <Scales>
            <DbScale name="L" line />
            <DbScale name="R" />
          </Scales>
        </Split>
        <WaveScroll>
          <Icon w={24} h={5} strokeDasharray="1 1" strokeWidth="1"><path d="M0 .500H24M0 2.500H24M0 4.500H24" /></Icon>
          <Icon w={6} h={3}><path d="M0 3L3 0L6 3Z" {...F} /></Icon>
        </WaveScroll>
      </EditorBody>
      <Transport>
        <Time>9:09.533</Time>
        <ToolGroup>
          {transportIcons.map(([n, k, g]) => (
            <IconButton key={n} $w={30} $off={k === "off"} $red={k === "red"} aria-label={n}><Icon w={17} h={17}>{g}</Icon></IconButton>
          ))}
        </ToolGroup>
        <Spacer />
        <ToolGroup>
          {zoomIcons.map(([n, g], i) => (
            <IconButton key={n} $w={30} $off={i === 9} aria-label={n}><Icon w={18} h={18} overflow="visible" strokeWidth="1.200">{g}</Icon></IconButton>
          ))}
        </ToolGroup>
      </Transport>
    </Panel>
  );
}

function Levels() {
  return (
    <Panel $grow>
      <Tabs $pl={11}><Tab $bright>Pegel <Burger /></Tab></Tabs>
      <Meter><MeterBars /><MeterClip /></Meter>
      <MeterScale viewBox="0 0 639 5" preserveAspectRatio="none" shapeRendering="crispEdges" aria-hidden="true">
        {Array.from({ length: 61 }, (_, i) => <rect key={i} x={Math.round((i * 638) / 60)} width="1" height={i % 3 ? 2 : 5} fill="#8e8e8e" />)}
      </MeterScale>
      <MeterNumbers>{levels.map((l) => <span key={l}>{l}</span>)}</MeterNumbers>
    </Panel>
  );
}

function Selection() {
  return (
    <Panel $w={273} $active>
      <Tabs $pl={10}><Tab $bright>Auswahl/Ansicht <Burger w={9} /></Tab></Tabs>
      <SelTable>
        <colgroup><col width="47" /><col width="72" /><col width="71" /><col width="54" /></colgroup>
        <thead><tr><th aria-label="Bereich" /><th>Start</th><th>Ende</th><th>Dauer</th></tr></thead>
        <tbody>
          <tr><th>Auswahl</th><td><Value>9:09.533</Value></td><td><Value $edit>9:24.353</Value></td><td><Value>0:14.820</Value></td></tr>
          <tr><th>Ansicht</th><td><Value>9:03.450</Value></td><td><Value>9:15.372</Value></td><td><Value>0:11.922</Value></td></tr>
        </tbody>
      </SelTable>
    </Panel>
  );
}

export default function App() {
  return (
    <Shell>
      <Global />
      <Header />
      <Tools />
      <Workspace>
        <Column $w={318}>
          <FilesPanel />
          <PropertiesPanel />
          <Panel><Tabs $gap={39}><Tab>Protokoll</Tab><Tab $on $bright>Video <Burger /></Tab></Tabs></Panel>
        </Column>
        <Column>
          <Row $grow>
            <Editor />
            <Panel $w={62}>
              <SideRow $h={29} $pt={6}><Cut>Essent</Cut></SideRow>
              <SideRow $h={32} $pt={9} $it>Keine Ausw</SideRow>
              <SideRow $h={36} $pt={8} $c="#454545">Vorgabe:</SideRow>
              <SideRow $h={31} />
              <ScrollTrack><Thumb $w="25px" /></ScrollTrack>
            </Panel>
          </Row>
          <Row><Levels /><Selection /></Row>
        </Column>
      </Workspace>
      <StatusBar>
        Geöffnet in 0,02 Sekunden
        <Spacer />
        <Cell $w={50} /><Cell $w={137} /><Cell $w={219}>48000 Hz ● 32-Bit (Gleitkomma) ● Stereo</Cell>
        <Cell $w={74}>984,63 MB</Cell><Cell $w={72} $pl={17}>44:48.682</Cell><Cell $w={84}>486,33 GB frei</Cell><Cell $w={49} />
      </StatusBar>
      <RedRing shadow at="left: 581px; top: 1px; width: 75px; height: 33px;" />
      <RedRing shadow at="left: 717px; top: 5px; width: 75px; height: 33px;" />
      <RedRing at="right: 77px; bottom: 42px; width: 150px; height: 33px;" />
    </Shell>
  );
}
